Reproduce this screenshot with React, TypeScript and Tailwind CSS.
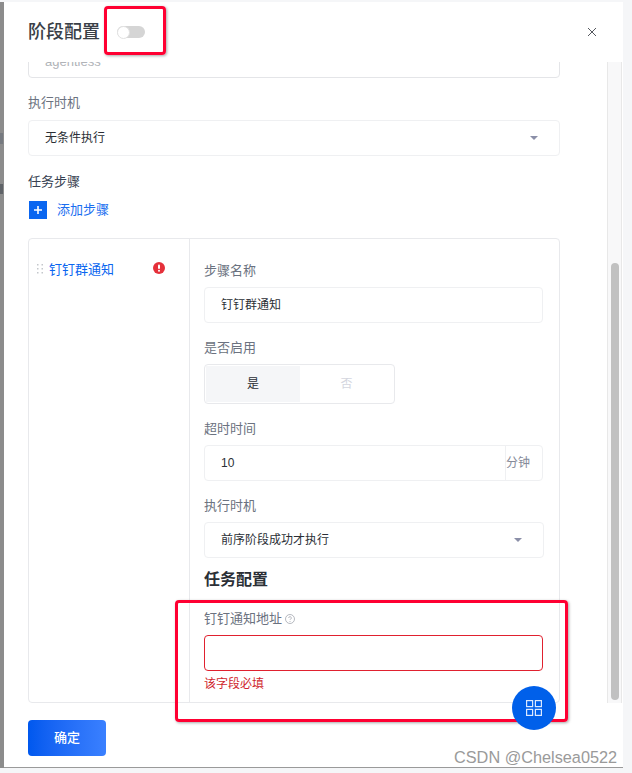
import React from "react";

const Label = ({ children }: { children: React.ReactNode }) => (
  <div className="h-[20px] mb-[7px] text-[13px] leading-[22px] text-[#6b7280]">{children}</div>
);

const Caret = () => (
  <svg width="10" height="6" viewBox="0 0 10 6" className="shrink-0">
    <path d="M1 1h8L5 5z" fill="#8b8fa8" />
  </svg>
);

const Select = ({ value, className }: { value: string; className: string }) => (
  <div className={`h-[36px] flex items-center justify-between pl-[16px] pr-[20px] border border-[#eff0f2] rounded-[4px] text-[12px] text-[#2b2f36] ${className}`}>
    <span>{value}</span>
    <Caret />
  </div>
);

export default function App() {
  return (
    <div
      className="relative w-[632px] h-[773px] overflow-hidden bg-[#f5f6f8] pt-[2px] flex items-start"
      style={{ fontFamily: '"Liberation Sans", "Noto Sans CJK SC", sans-serif' }}
    >
      {/* page behind the drawer, only a sliver shows */}
      <div className="relative w-[4px] h-[766px] bg-[#8c8c8c] shrink-0">
        <div className="absolute left-0 top-[131px] w-[3px] h-[11px] bg-[#767a80]" />
        <div className="absolute left-0 top-[182px] w-[3px] h-[10px] bg-[#5f6368]" />
      </div>
      <div className="w-[619px] h-[766px] bg-white border-b border-[#9a9a9a] flex flex-col shrink-0">
        {/* header */}
        <div className="relative z-10 bg-white h-[60px] flex items-center pl-[24px] pr-[26px] shrink-0">
          <span className="text-[18px] font-medium leading-[24px] text-[#3a3f47]">阶段配置</span>
          <div className="relative ml-[17px] w-[28px] h-[12px] rounded-full bg-[#d5d5d5]">
            <div className="absolute left-0 -top-[0.5px] w-[13px] h-[13px] rounded-full bg-white border border-[#e2e2e2]" />
          </div>
          <svg width="10" height="10" viewBox="0 0 10 10" className="ml-auto">
            <path d="M1 1l8 8M9 1l-8 8" stroke="#55585e" strokeWidth="1" fill="none" />
          </svg>
        </div>

        {/* scroll area */}
        <div className="flex h-[641px] shrink-0 overflow-hidden">
          <div className="flex-1 pl-[24px]">
            <div className="w-[532px] h-[36px] -mt-[20px] border border-[#e4e5e8] rounded-[4px] pl-[16px] pt-[3px] flex items-center text-[13px] text-[#b0b3b8]">
              agentless
            </div>

            <div className="mt-[14px] h-[20px] mb-[8px] text-[13px] leading-[22px] text-[#6b7280]">执行时机</div>
            <Select value="无条件执行" className="w-[532px]" />

            <div className="mt-[15px] h-[20px] text-[13px] leading-[21px] text-[#374151]">任务步骤</div>

            <div className="mt-[10px] flex items-center h-[18px]">
              <div className="ml-[1px] w-[18px] h-[18px] bg-[#0a66f0] flex items-center justify-center">
                <svg width="8" height="8" viewBox="0 0 8 8">
                  <path d="M4 0v8M0 4h8" stroke="#fff" strokeWidth="1.6" />
                </svg>
              </div>
              <span className="ml-[10px] text-[13px] text-[#1a6ef0]">添加步骤</span>
            </div>

            {/* step card */}
            <div className="mt-[19px] w-[532px] h-[465px] border border-[#e8e9ec] rounded-[4px] flex">
              <div className="w-[161px] border-r border-[#e8e9ec] shrink-0 pt-[20px] pl-[8px] pr-[24px]">
                <div className="flex items-center h-[20px]">
                  <svg width="6" height="10" viewBox="0 0 6 10" className="shrink-0">
                    <g fill="#c4c7cc">
                      <rect x="0" y="0" width="1.5" height="1.5" />
                      <rect x="4.5" y="0" width="1.5" height="1.5" />
                      <rect x="0" y="4" width="1.5" height="1.5" />
                      <rect x="4.5" y="4" width="1.5" height="1.5" />
                      <rect x="0" y="8" width="1.5" height="1.5" />
                      <rect x="4.5" y="8" width="1.5" height="1.5" />
                    </g>
                  </svg>
                  <span className="ml-[6px] mt-[2px] text-[13px] text-[#0a66f0]">钉钉群通知</span>
                  <svg width="12" height="12" viewBox="0 0 12 12" className="ml-auto -mt-[2px]">
                    <circle cx="6" cy="6" r="6" fill="#e5303a" />
                    <rect x="5" y="2.5" width="2" height="4.5" rx="1" fill="#fff" />
                    <circle cx="6" cy="8.8" r="1" fill="#fff" />
                  </svg>
                </div>
              </div>

              <div className="flex-1 pl-[14px] pt-[21px]">
                <Label>步骤名称</Label>
                <div className="w-[339px] h-[36px] border border-[#eff0f2] rounded-[4px] pl-[16px] flex items-center text-[12px] text-[#2b2f36]">
                  钉钉群通知
                </div>

                <div className="mt-[14px]">
                  <Label>是否启用</Label>
                </div>
                <div className="w-[191px] h-[40px] border border-[#e8e9ec] rounded-[4px] p-[1px] flex text-[12px]">
                  <div className="w-[94px] bg-[#f5f6f8] flex items-center justify-center text-[#2b2f36]">是</div>
                  <div className="flex-1 flex items-center justify-center text-[#d4d6de]">否</div>
                </div>

                <div className="mt-[14px]">
                  <Label>超时时间</Label>
                </div>
                <div className="w-[339px] h-[36px] border border-[#eff0f2] rounded-[4px] flex items-center text-[12px]">
                  <div className="flex-1 h-full pl-[16px] flex items-center border-r border-[#eff0f2] text-[#2b2f36]">10</div>
                  <div className="w-[36px] text-[#858a99]">分钟</div>
                </div>

                <div className="mt-[14px]">
                  <Label>执行时机</Label>
                </div>
                <Select value="前序阶段成功才执行" className="w-[340px]" />

                <div className="mt-[9px] h-[24px] text-[16px] font-bold leading-[26px] text-[#2b2f36]">任务配置</div>

                <div className="mt-[17px]">
                  <Label>
                    <span className="inline-flex items-center">
                      钉钉通知地址
                      <svg width="10" height="10" viewBox="0 0 10 10" className="ml-[3px]">
                        <circle cx="5" cy="5" r="4.5" fill="none" stroke="#a3a7b0" strokeWidth="0.8" />
                        <path d="M3.7 4a1.3 1.3 0 1 1 1.9 1.1c-.4.2-.6.5-.6.9" fill="none" stroke="#a3a7b0" strokeWidth="0.8" />
                        <circle cx="5" cy="7.5" r="0.5" fill="#a3a7b0" />
                      </svg>
                    </span>
                  </Label>
                </div>
                <div className="w-[339px] h-[36px] border border-[#e0212f] rounded-[4px]" />
                <div className="mt-[2px] h-[20px] text-[12px] leading-[22px] text-[#cf1f2e]">该字段必填</div>
              </div>
            </div>
          </div>

          {/* scrollbar */}
          <div className="w-[15px] shrink-0 mr-[1px] bg-[#f8f8f9] border-x border-[#e8e8e8] pl-[3px] pt-[201px]">
            <div className="w-[8px] h-[437px] rounded-full bg-[#c1c1c1]" />
          </div>
        </div>

        {/* footer */}
        <div className="pl-[24px] pt-[17px]">
          <button className="w-[78px] h-[36px] rounded-[4px] bg-gradient-to-r from-[#0058ee] to-[#3a80ff] text-white text-[13px] font-medium">
            确定
          </button>
        </div>
      </div>

      {/* annotation marks */}
      <div className="absolute z-20 left-[104px] top-[6px] w-[62px] h-[49px] border-[3px] border-[#ff0032] rounded-[4px] shadow-[1px_1px_3px_rgba(0,0,0,0.35)]" />
      <div className="absolute z-20 left-[175px] top-[600px] w-[393px] h-[122px] border-[3px] border-[#ff0032] rounded-[4px] shadow-[1px_1px_3px_rgba(0,0,0,0.35)]" />

      {/* floating button */}
      <div className="absolute z-30 left-[512px] top-[686px] w-[44px] h-[44px] rounded-full bg-[#0060ea] flex items-center justify-center">
        <svg width="16" height="16" viewBox="0 0 16 16" fill="none" stroke="#dbe8ff" strokeWidth="1.2">
          <rect x="0.6" y="0.6" width="6" height="6" />
          <rect x="9.4" y="0.6" width="6" height="6" />
          <rect x="0.6" y="9.4" width="6" height="6" />
          <rect x="9.4" y="9.4" width="6" height="6" />
        </svg>
      </div>

      {/* watermark */}
      <div className="absolute z-30 left-[454px] top-[748px] text-[16.3px] leading-[18px] whitespace-nowrap text-[#9a9a9a]">
        CSDN @Chelsea0522
      </div>
    </div>
  );
}
